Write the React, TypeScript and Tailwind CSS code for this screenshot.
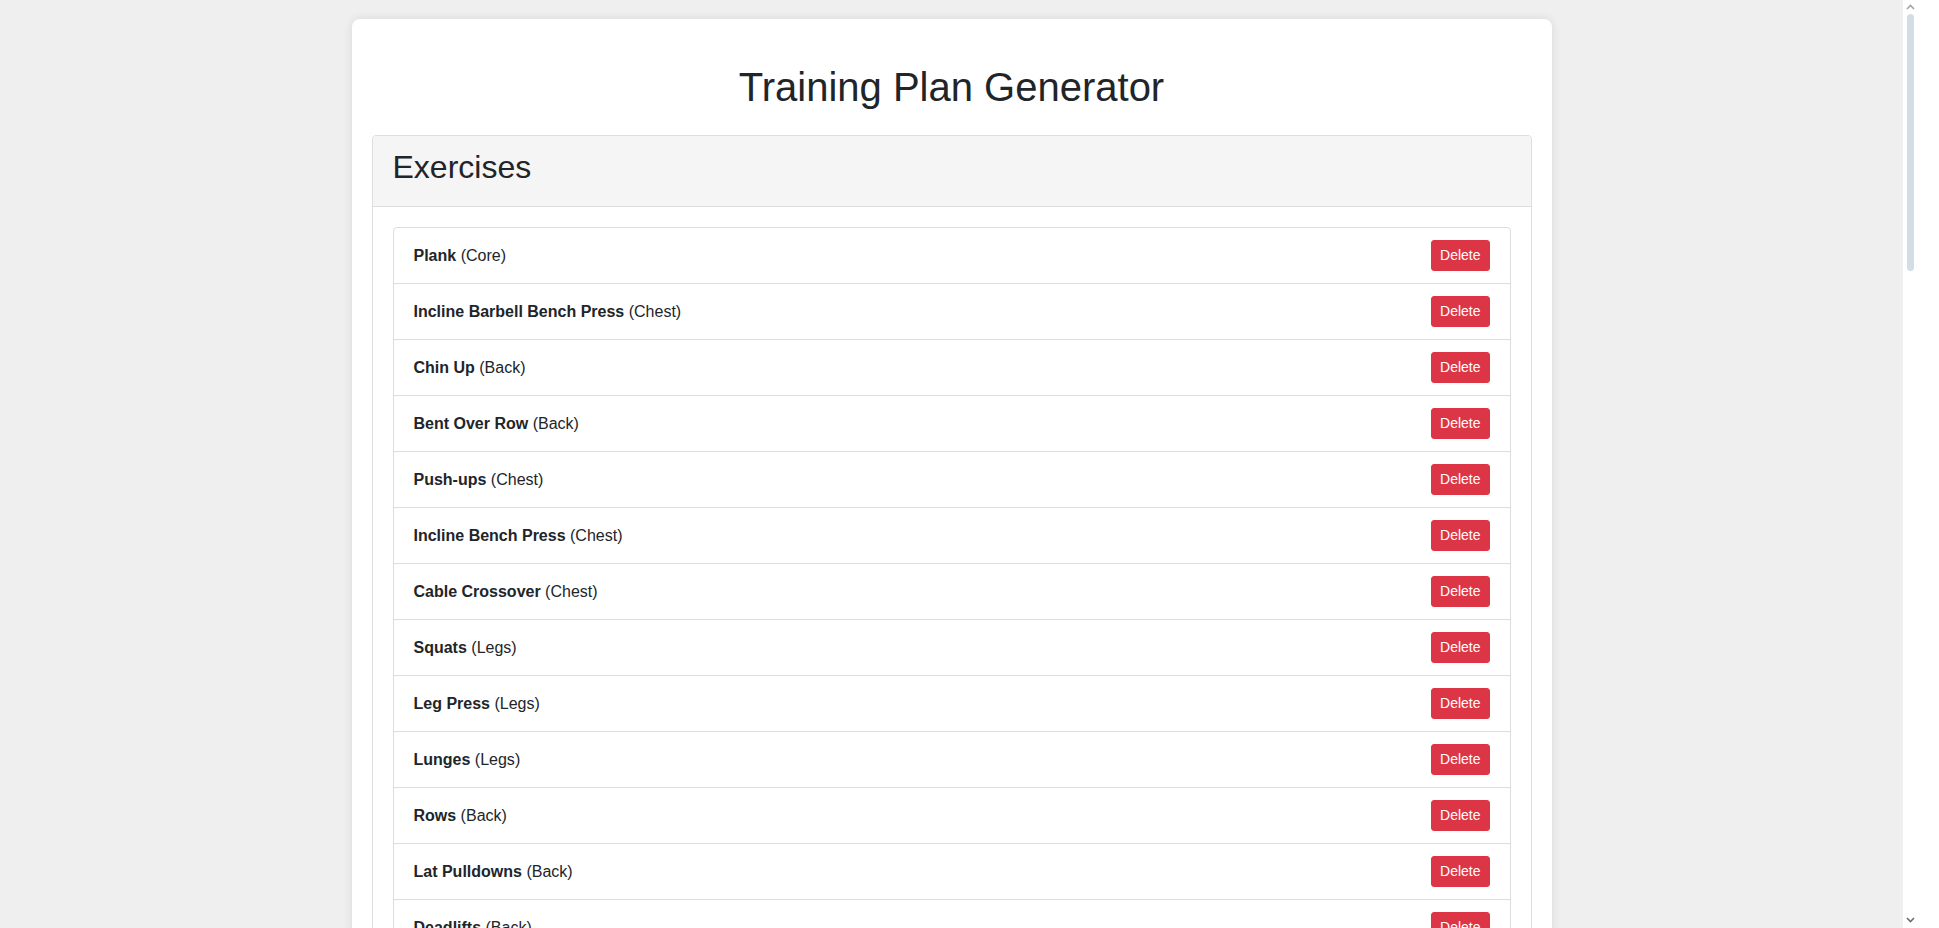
import React from "react";

type Exercise = { name: string; group: string };

const exercises: Exercise[] = [
  { name: "Plank", group: "Core" },
  { name: "Incline Barbell Bench Press", group: "Chest" },
  { name: "Chin Up", group: "Back" },
  { name: "Bent Over Row", group: "Back" },
  { name: "Push-ups", group: "Chest" },
  { name: "Incline Bench Press", group: "Chest" },
  { name: "Cable Crossover", group: "Chest" },
  { name: "Squats", group: "Legs" },
  { name: "Leg Press", group: "Legs" },
  { name: "Lunges", group: "Legs" },
  { name: "Rows", group: "Back" },
  { name: "Lat Pulldowns", group: "Back" },
  { name: "Deadlifts", group: "Back" },
];

const ExerciseRow: React.FC<{ item: Exercise; first: boolean }> = ({ item, first }) => (
  <li
    className={`flex items-center justify-between px-5 py-3 border-[#dddddd] ${
      first ? "" : "border-t"
    }`}
  >
    <span className="text-base leading-6 text-[#212529]">
      <strong className="font-bold">{item.name}</strong> ({item.group})
    </span>
    <button className="h-[31px] px-2 rounded-[3px] border border-[#dc3545] bg-[#dc3545] text-white text-sm leading-[21px]">
      Delete
    </button>
  </li>
);

// browser scrollbar as seen in the screenshot
const FakeScrollbar: React.FC = () => (
  <div className="w-[36px] h-full bg-white flex flex-col items-start pl-[4px]">
    <svg width="9" height="6" viewBox="0 0 9 6" className="mt-[4px] ml-[-1px]">
      <path d="M1 5 L4.5 1.5 L8 5" fill="none" stroke="#a3a3a3" strokeWidth="1.6" />
    </svg>
    <div className="mt-[4px] w-[7px] h-[257px] rounded-full bg-[#d3dde6]" />
    <div className="flex-1" />
    <svg width="9" height="6" viewBox="0 0 9 6" className="mb-[5px] ml-[-1px]">
      <path d="M1 1 L4.5 4.5 L8 1" fill="none" stroke="#6b6b6b" strokeWidth="1.6" />
    </svg>
  </div>
);

export default function App() {
  return (
    <div className="flex h-screen w-full overflow-hidden font-['Liberation_Sans',Arial,sans-serif]">
      <main className="flex-1 h-full overflow-hidden bg-[#efefef] pt-[19px]">
        <div className="w-[1200px] mx-auto bg-white rounded-lg p-5 shadow-[0_0_10px_rgba(0,0,0,0.1)]">
          <h1 className="mt-6 mb-6 text-center text-[40px] leading-[48px] text-[#212529]">
            Training Plan Generator
          </h1>

          <section className="border border-[#dddddd] rounded">
            <div className="bg-[#f5f5f5] border-b border-[#dddddd] px-5 pt-3 pb-5 rounded-t">
              <h2 className="text-[32px] leading-[38px] text-[#212529]">Exercises</h2>
            </div>
            <div className="p-5">
              <ul className="border border-[#dddddd] rounded">
                {exercises.map((item, i) => (
                  <ExerciseRow key={item.name} item={item} first={i === 0} />
                ))}
              </ul>
            </div>
          </section>
        </div>
      </main>
      <FakeScrollbar />
    </div>
  );
}
